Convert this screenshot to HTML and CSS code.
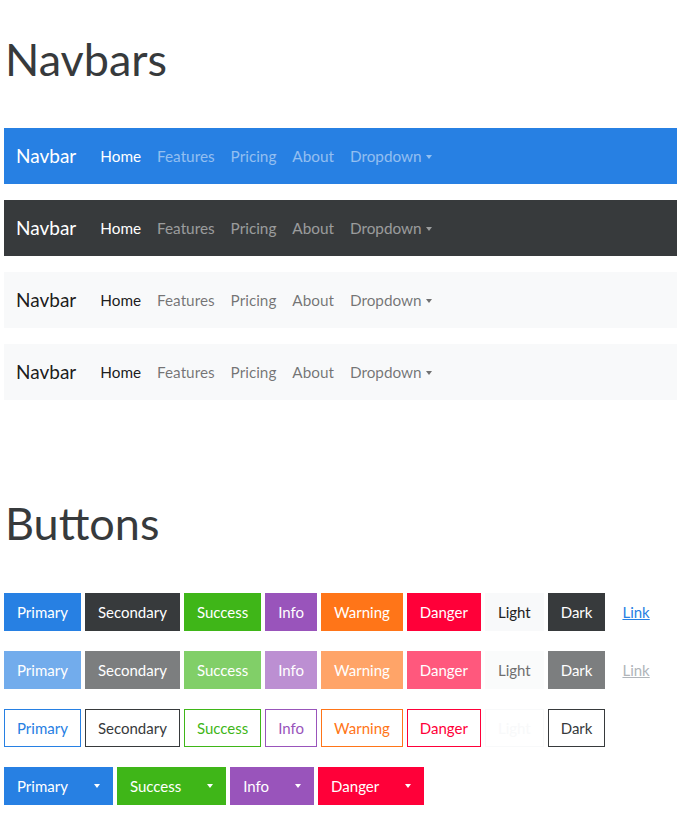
FILE: index.html
```html
<!DOCTYPE html>
<html lang="en">
<head>
<meta charset="utf-8">
<title>Navbars &amp; Buttons</title>
<link rel="stylesheet" href="styles.css">
</head>
<body>
<div class="page">
  <section class="section section-navbars">
    <h1 class="title">Navbars</h1>

    <nav class="navbar navbar-primary">
      <span class="brand">Navbar</span>
      <ul class="nav">
        <li class="nav-link active">Home</li>
        <li class="nav-link">Features</li>
        <li class="nav-link">Pricing</li>
        <li class="nav-link">About</li>
        <li class="nav-link">Dropdown<span class="caret"></span></li>
      </ul>
    </nav>

    <nav class="navbar navbar-dark">
      <span class="brand">Navbar</span>
      <ul class="nav">
        <li class="nav-link active">Home</li>
        <li class="nav-link">Features</li>
        <li class="nav-link">Pricing</li>
        <li class="nav-link">About</li>
        <li class="nav-link">Dropdown<span class="caret"></span></li>
      </ul>
    </nav>

    <nav class="navbar navbar-light">
      <span class="brand">Navbar</span>
      <ul class="nav">
        <li class="nav-link active">Home</li>
        <li class="nav-link">Features</li>
        <li class="nav-link">Pricing</li>
        <li class="nav-link">About</li>
        <li class="nav-link">Dropdown<span class="caret"></span></li>
      </ul>
    </nav>

    <nav class="navbar navbar-light">
      <span class="brand">Navbar</span>
      <ul class="nav">
        <li class="nav-link active">Home</li>
        <li class="nav-link">Features</li>
        <li class="nav-link">Pricing</li>
        <li class="nav-link">About</li>
        <li class="nav-link">Dropdown<span class="caret"></span></li>
      </ul>
    </nav>
  </section>

  <section class="section section-buttons">
    <h1 class="title title-buttons">Buttons</h1>

    <div class="btn-row">
      <button class="btn btn-primary">Primary</button>
      <button class="btn btn-secondary">Secondary</button>
      <button class="btn btn-success">Success</button>
      <button class="btn btn-info">Info</button>
      <button class="btn btn-warning">Warning</button>
      <button class="btn btn-danger">Danger</button>
      <button class="btn btn-light">Light</button>
      <button class="btn btn-dark">Dark</button>
      <button class="btn btn-link">Link</button>
    </div>

    <div class="btn-row disabled">
      <button class="btn btn-primary">Primary</button>
      <button class="btn btn-secondary">Secondary</button>
      <button class="btn btn-success">Success</button>
      <button class="btn btn-info">Info</button>
      <button class="btn btn-warning">Warning</button>
      <button class="btn btn-danger">Danger</button>
      <button class="btn btn-light">Light</button>
      <button class="btn btn-dark">Dark</button>
      <button class="btn btn-link">Link</button>
    </div>

    <div class="btn-row">
      <button class="btn btn-outline-primary">Primary</button>
      <button class="btn btn-outline-secondary">Secondary</button>
      <button class="btn btn-outline-success">Success</button>
      <button class="btn btn-outline-info">Info</button>
      <button class="btn btn-outline-warning">Warning</button>
      <button class="btn btn-outline-danger">Danger</button>
      <button class="btn btn-outline-light">Light</button>
      <button class="btn btn-outline-dark">Dark</button>
    </div>

    <div class="btn-row">
      <div class="btn-group">
        <button class="btn btn-primary">Primary</button>
        <button class="btn btn-primary btn-split"><span class="caret caret-split"></span></button>
      </div>
      <div class="btn-group">
        <button class="btn btn-success">Success</button>
        <button class="btn btn-success btn-split"><span class="caret caret-split"></span></button>
      </div>
      <div class="btn-group">
        <button class="btn btn-info">Info</button>
        <button class="btn btn-info btn-split"><span class="caret caret-split"></span></button>
      </div>
      <div class="btn-group">
        <button class="btn btn-danger">Danger</button>
        <button class="btn btn-danger btn-split"><span class="caret caret-split"></span></button>
      </div>
    </div>
  </section>
</div>
</body>
</html>
```

FILE: styles.css
```css
* { box-sizing: border-box; }

html, body {
  margin: 0;
  padding: 0;
  background: #fff;
}

body {
  font-family: Lato, "Noto Sans", "Liberation Sans", sans-serif;
  font-size: 16px;
  line-height: 1.5;
  color: #373a3c;
}

.page {
  padding: 0 0 0 4px;
}

.title {
  margin: 32px 0 42px 1px;
  font-size: 45px;
  font-weight: 400;
  line-height: 1.2;
  color: #373a3c;
}

.title-buttons {
  margin-top: 96px;
  margin-bottom: 43px;
}

/* Navbars */
.navbar {
  display: flex;
  align-items: center;
  height: 56px;
  padding: 0 12px;
  margin-bottom: 16px;
}

.brand {
  font-size: 19px;
  line-height: 30px;
  margin-right: 16px;
}

.nav {
  display: flex;
  list-style: none;
  margin: 0;
  padding: 0;
}

.nav-link {
  padding: 8px;
  font-size: 15.3px;
  line-height: 24px;
  display: flex;
  align-items: center;
}

.caret {
  display: inline-block;
  width: 0;
  height: 0;
  margin-left: 4px;
  border-top: 4px solid;
  border-left: 3.5px solid transparent;
  border-right: 3.5px solid transparent;
  margin-top: 1px;
}

.navbar-primary { background: #2780e3; }
.navbar-primary .brand { color: #fff; }
.navbar-primary .nav-link { color: rgba(255, 255, 255, 0.5); }
.navbar-primary .nav-link.active { color: #fff; }

.navbar-dark { background: #373a3c; }
.navbar-dark .brand { color: #fff; }
.navbar-dark .nav-link { color: rgba(255, 255, 255, 0.5); }
.navbar-dark .nav-link.active { color: #fff; }

.navbar-light { background: #f8f9fa; }
.navbar-light .brand { color: rgba(0, 0, 0, 0.9); }
.navbar-light .nav-link { color: rgba(0, 0, 0, 0.55); }
.navbar-light .nav-link.active { color: rgba(0, 0, 0, 0.9); }

/* Buttons */
.btn-row {
  display: flex;
  flex-wrap: wrap;
  gap: 4px;
  margin-bottom: 20px;
}

.btn {
  font-family: inherit;
  font-size: 15px;
  line-height: 24px;
  padding: 6px 12px;
  border: 1px solid transparent;
  border-radius: 0;
  background: transparent;
  color: #fff;
  cursor: pointer;
}

.btn-group {
  display: flex;
}

.btn-split {
  padding: 6px 12px;
  display: flex;
  align-items: center;
}

.caret-split {
  margin-left: 0;
  margin-top: 0;
}

.btn-primary { background: #2780e3; border-color: #2780e3; }
.btn-secondary { background: #373a3c; border-color: #373a3c; }
.btn-success { background: #3fb618; border-color: #3fb618; }
.btn-info { background: #9954bb; border-color: #9954bb; }
.btn-warning { background: #ff7518; border-color: #ff7518; }
.btn-danger { background: #ff0039; border-color: #ff0039; }
.btn-light { background: #f8f9fa; border-color: #f8f9fa; color: #222; }
.btn-dark { background: #373a3c; border-color: #373a3c; }
.btn-link { color: #2780e3; text-decoration: underline; margin-left: 0; }

.disabled .btn { opacity: 0.65; }
.disabled .btn-link { color: #868e96; }

.btn-outline-primary { border-color: #2780e3; color: #2780e3; }
.btn-outline-secondary { border-color: #373a3c; color: #373a3c; }
.btn-outline-success { border-color: #3fb618; color: #3fb618; }
.btn-outline-info { border-color: #9954bb; color: #9954bb; }
.btn-outline-warning { border-color: #ff7518; color: #ff7518; }
.btn-outline-danger { border-color: #ff0039; color: #ff0039; }
.btn-outline-light { border-color: #f8f9fa; color: #f8f9fa; }
.btn-outline-dark { border-color: #373a3c; color: #373a3c; }
```
